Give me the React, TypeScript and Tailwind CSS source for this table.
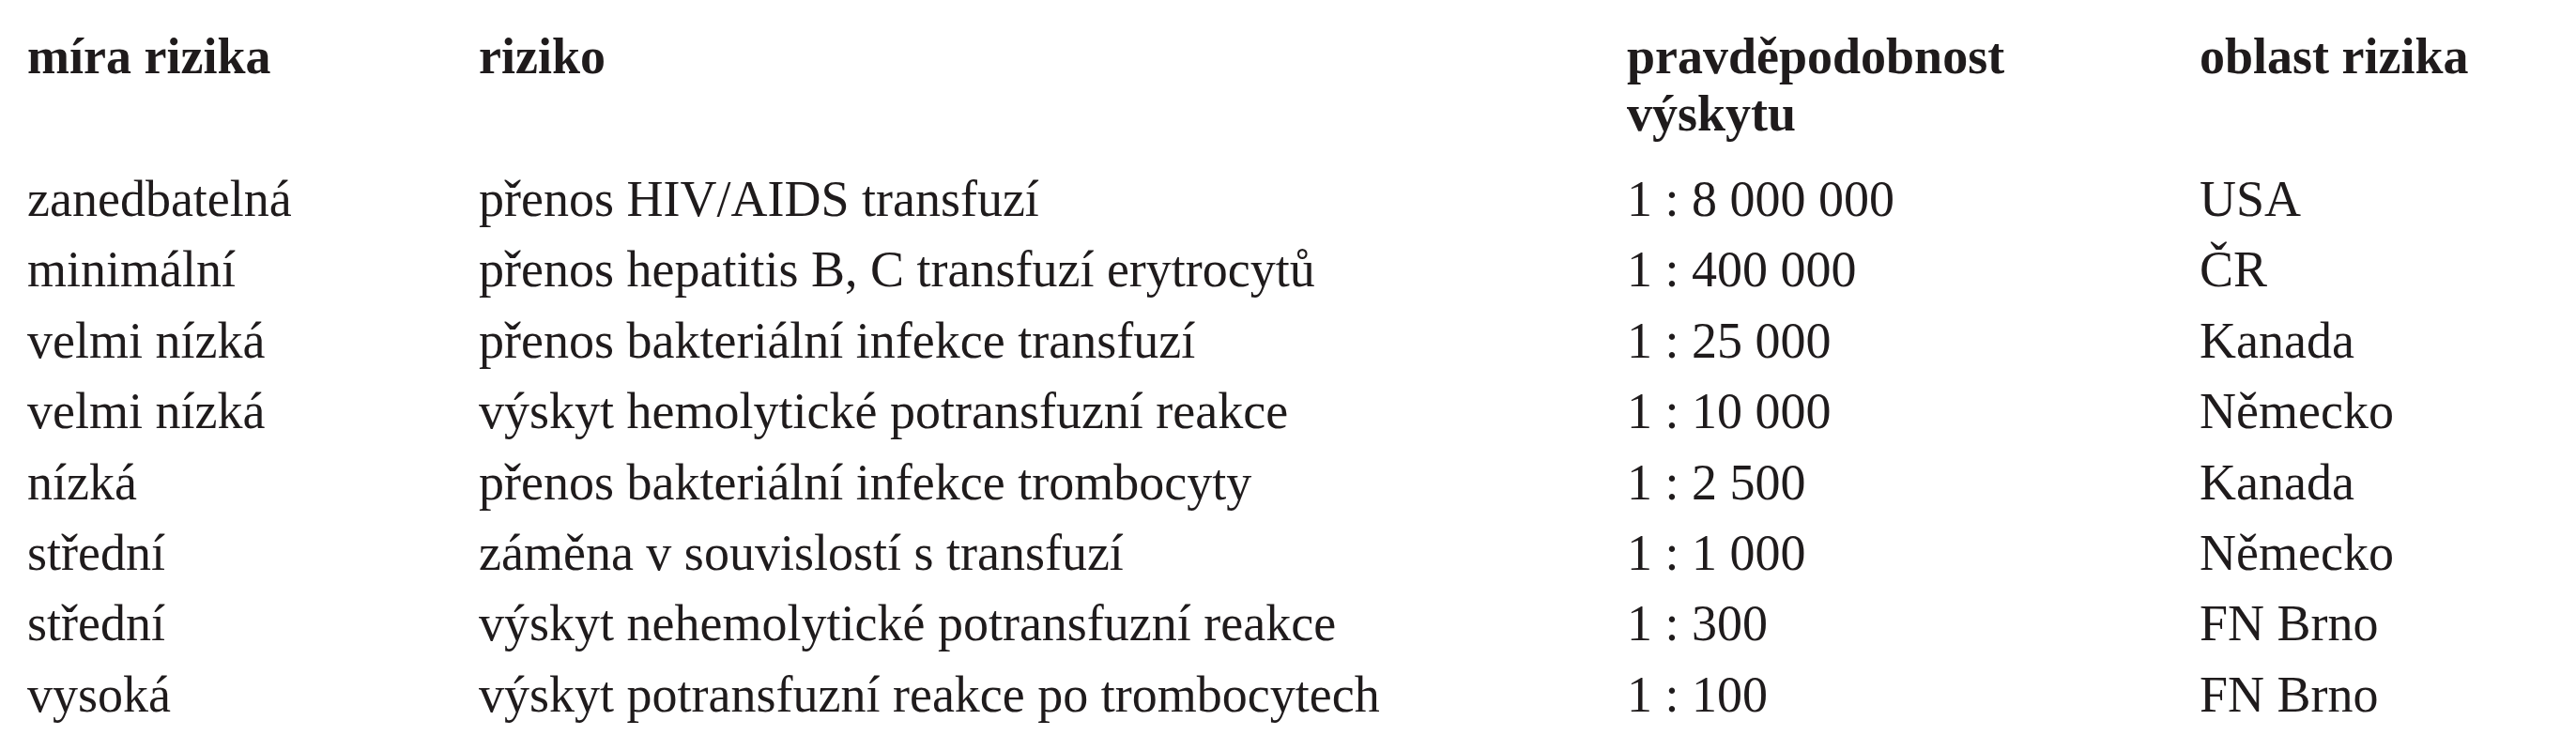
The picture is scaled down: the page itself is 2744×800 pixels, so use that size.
const rows = [
  ["zanedbatelná", "přenos HIV/AIDS transfuzí", "1 : 8 000 000", "USA"],
  ["minimální", "přenos hepatitis B, C transfuzí erytrocytů", "1 : 400 000", "ČR"],
  ["velmi nízká", "přenos bakteriální infekce transfuzí", "1 : 25 000", "Kanada"],
  ["velmi nízká", "výskyt hemolytické potransfuzní reakce", "1 : 10 000", "Německo"],
  ["nízká", "přenos bakteriální infekce trombocyty", "1 : 2 500", "Kanada"],
  ["střední", "záměna v souvislostí s transfuzí", "1 : 1 000", "Německo"],
  ["střední", "výskyt nehemolytické potransfuzní reakce", "1 : 300", "FN Brno"],
  ["vysoká", "výskyt potransfuzní reakce po trombocytech", "1 : 100", "FN Brno"],
]

export default function App() {
  return (
    <div className="min-h-[800px] w-[2744px] bg-white pl-[29px] font-['Liberation_Serif','Times_New_Roman',serif] text-[54px] text-[#1f1b1c]">
      <div className="grid grid-cols-[481px_1223px_610px_1fr] pt-[30px] pb-[23px] font-bold leading-[61px]">
        <div>míra rizika</div>
        <div>riziko</div>
        <div>
          pravděpodobnost
          <br />
          výskytu
        </div>
        <div>oblast rizika</div>
      </div>
      <div className="flex flex-col">
        {rows.map((row, i) => (
          <div key={i} className="grid grid-cols-[481px_1223px_610px_1fr] leading-[75.4px] whitespace-nowrap">
            {row.map((cell, j) => (
              <div key={j}>{cell}</div>
            ))}
          </div>
        ))}
      </div>
    </div>
  )
}
